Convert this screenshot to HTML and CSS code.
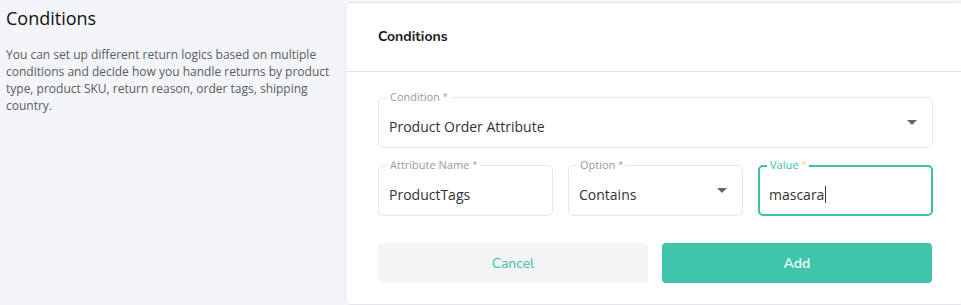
FILE: index.html
```html
<!DOCTYPE html>
<html lang="en">
<head>
    <meta charset="utf-8">
    <title>Conditions</title>
    <link rel="stylesheet" href="styles.css">
</head>
<body>
    <div class="page">
        <div class="intro">
            <h1>Conditions</h1>
            <p>You can set up different return logics based on multiple conditions and decide how you handle returns by product type, product SKU, return reason, order tags, shipping country.</p>
        </div>

        <div class="card">
            <div class="card-header">Conditions</div>
            <div class="card-body">
                <div class="field field-select">
                    <span class="field-label">Condition <i>*</i></span>
                    <span class="field-value">Product Order Attribute</span>
                    <span class="caret"></span>
                </div>

                <div class="field-row">
                    <div class="field">
                        <span class="field-label">Attribute Name <i>*</i></span>
                        <span class="field-value">ProductTags</span>
                    </div>
                    <div class="field field-select">
                        <span class="field-label">Option <i>*</i></span>
                        <span class="field-value">Contains</span>
                        <span class="caret"></span>
                    </div>
                    <div class="field field-focus">
                        <span class="field-label">Value <i>*</i></span>
                        <span class="field-value">mascara<span class="cursor"></span></span>
                    </div>
                </div>

                <div class="actions">
                    <button class="btn btn-cancel">Cancel</button>
                    <button class="btn btn-add">Add</button>
                </div>
            </div>
        </div>
    </div>
</body>
</html>
```
FILE: styles.css
```css
body {
    margin: 0;
    background-color: #f4f5f8;
    font-family: "Open Sans", Arial, sans-serif;
    overflow: hidden;
}
.page {
    display: flex;
    width: 961px;
    height: 305px;
}
.intro {
    width: 339px;
    flex: none;
    padding-left: 6px;
}
.intro h1 {
    margin: 6px 0 0;
    font-size: 18px;
    font-weight: 500;
    color: #111;
    line-height: 24px;
}
.intro p {
    margin: 16px 0 0;
    font-size: 12px;
    line-height: 17px;
    color: #585c63;
    padding-right: 14px;
}
.card {
    flex: none;
    width: 620px;
    margin-top: 2px;
    height: 303px;
    background-color: #ffffff;
    border: 1px solid #e4e6ec;
    border-radius: 6px;
    box-sizing: border-box;
}
.card-header {
    height: 68px;
    line-height: 68px;
    padding: 0 32px;
    font-family: "Nunito", "Lato", sans-serif;
    font-weight: 700;
    font-size: 14px;
    color: #1b1b1b;
    border-bottom: 1px solid #e4e6ec;
}
.card-body {
    padding: 25px 32px 0;
    width: 555px;
}
.field {
    position: relative;
    height: 51px;
    border: 1px solid #e6e7ea;
    border-radius: 5px;
    box-sizing: border-box;
    display: flex;
    align-items: center;
    padding: 8px 10px 0;
}
.field-label {
    position: absolute;
    top: -8px;
    left: 8px;
    padding: 0 3px;
    background-color: #ffffff;
    font-size: 11px;
    line-height: 14px;
    color: #9a9a9a;
}
.field-label i {
    font-style: normal;
    font-size: 9px;
    vertical-align: top;
}
.field-value {
    font-size: 14px;
    color: #333;
}
.caret {
    position: absolute;
    right: 15px;
    top: 22px;
    width: 0;
    height: 0;
    border-left: 5px solid transparent;
    border-right: 5px solid transparent;
    border-top: 5px solid #666;
}
.field-row {
    display: grid;
    grid-template-columns: 175px 175px 175px;
    column-gap: 15px;
    margin-top: 17px;
}
.field-focus {
    border: 2px solid #3ebfa8;
    padding-left: 9px;
}
.field-focus .field-label {
    top: -9px;
    left: 7px;
    color: #3ebfa8;
}
.field-focus .field-label i {
    color: #f2d36b;
}
.cursor {
    display: inline-block;
    width: 1px;
    height: 17px;
    background-color: #333;
    vertical-align: -3px;
    margin-left: 1px;
}
.actions {
    display: grid;
    grid-template-columns: 270px 270px;
    column-gap: 14px;
    margin-top: 27px;
}
.btn {
    height: 40px;
    border: none;
    border-radius: 4px;
    font-family: "Nunito", "Lato", sans-serif;
    font-size: 14px;
    cursor: pointer;
}
.btn-cancel {
    background-color: #f3f4f6;
    color: #3ebfa8;
}
.btn-add {
    background-color: #40c4ab;
    color: #ffffff;
    font-weight: 600;
}
```
